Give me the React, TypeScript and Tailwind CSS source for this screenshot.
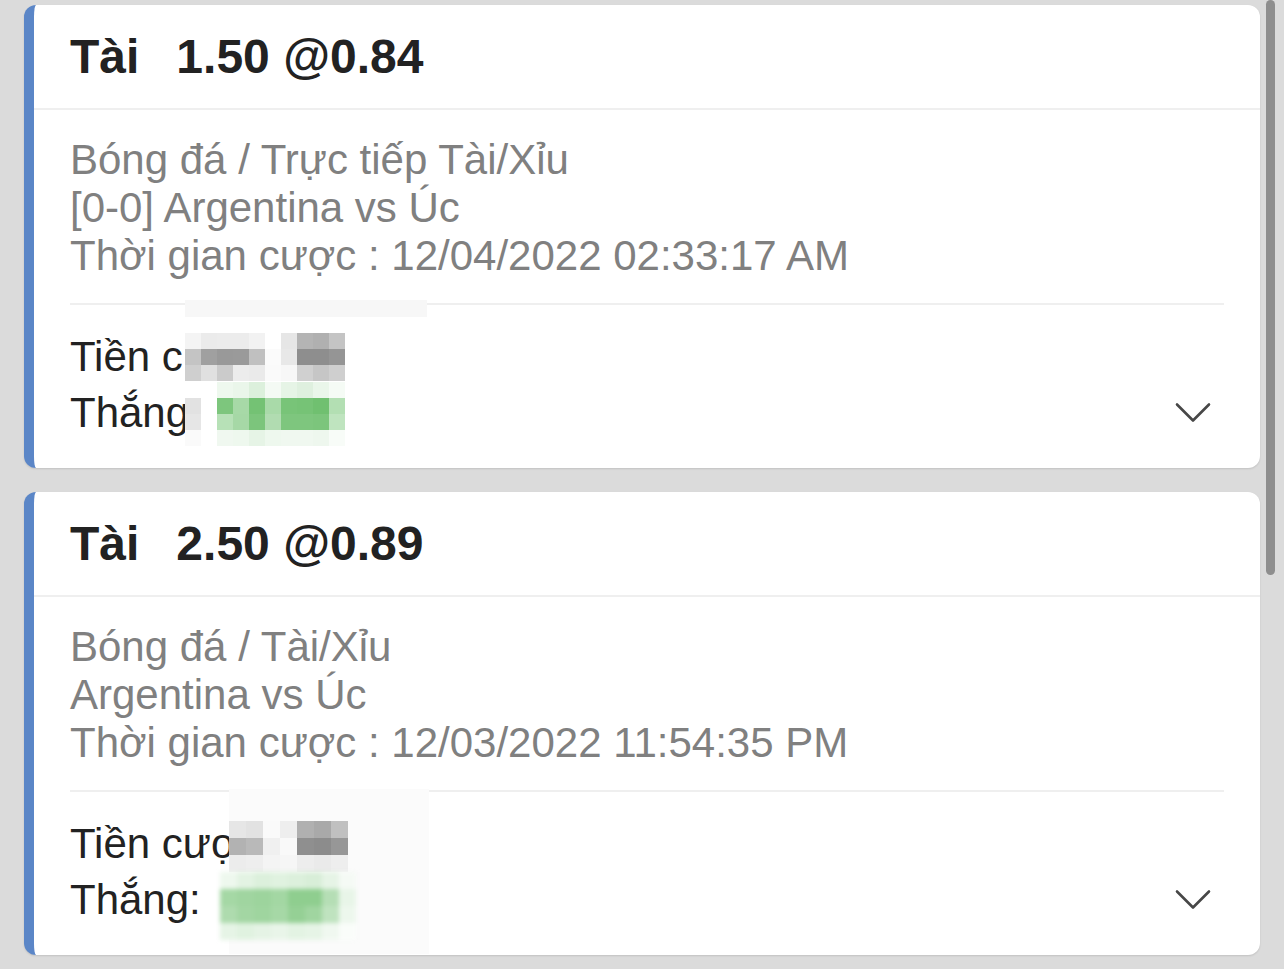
type Grid = {
  left: number;
  top: number;
  cw: number;
  ch: number;
  rows: string[][];
  soft?: boolean;
};

type Bet = {
  line: string;
  odds: string;
  info: string[];
  stake: string;
  win: string;
  veil: { left: number; top: number; w: number; h: number; color: string };
  grids: Grid[];
};

const bets: Bet[] = [
  {
    line: "1.50",
    odds: "@0.84",
    info: [
      "Bóng đá / Trực tiếp Tài/Xỉu",
      "[0-0] Argentina vs Úc",
      "Thời gian cược : 12/04/2022 02:33:17 AM",
    ],
    stake: "Tiền c",
    win: "Thắng",
    veil: { left: 151, top: 295, w: 242, h: 17, color: "#f7f7f7" },
    grids: [
      {
        left: 151,
        top: 328,
        cw: 16,
        ch: 16,
        rows: [
          ["#f4f4f4", "#ebebeb", "#ececec", "#ececec", "#f2f2f2", "#ffffff", "#e6e6e6", "#b4b4b4", "#b0b0b0", "#c4c4c4"],
          ["#c4c4c4", "#a0a0a0", "#999999", "#9a9a9a", "#c0c0c0", "#fbfbfb", "#e8e8e8", "#8e8e8e", "#8e8e8e", "#959595"],
          ["#cfcfcf", "#e0e0e0", "#cbcbcb", "#ececec", "#eaeaea", "#fafafa", "#f7f7f7", "#d0d0d0", "#c6c6c6", "#cfcfcf"],
        ],
      },
      {
        left: 151,
        top: 377,
        cw: 16,
        ch: 16,
        rows: [
          ["#ffffff", "#ffffff", "#eef8ee", "#eaf6ea", "#dcf0dc", "#f4faf4", "#e6f4e6", "#dff0df", "#eaf6ea", "#f5fbf5"],
          ["#e2e2e2", "#ffffff", "#7dc67d", "#a7d9a7", "#74c274", "#a9daa9", "#78c478", "#76c376", "#70c070", "#b3dfb3"],
          ["#e6e6e6", "#ffffff", "#b7e1b7", "#a6d8a6", "#7cc57c", "#b1dcb1", "#7ec67e", "#7ec67e", "#7cc57c", "#bfe4bf"],
          ["#fafafa", "#ffffff", "#f0f8f0", "#eef8ee", "#e6f4e6", "#eef8ee", "#f0f8f0", "#f0f8f0", "#eef7ee", "#f8fcf8"],
        ],
      },
    ],
  },
  {
    line: "2.50",
    odds: "@0.89",
    info: [
      "Bóng đá / Tài/Xỉu",
      "Argentina vs Úc",
      "Thời gian cược : 12/03/2022 11:54:35 PM",
    ],
    stake: "Tiền cược",
    win: "Thắng:",
    veil: { left: 195, top: 297, w: 200, h: 165, color: "#fbfbfb" },
    grids: [
      {
        left: 195,
        top: 329,
        cw: 17,
        ch: 17,
        rows: [
          ["#e6e6e6", "#e2e2e2", "#fafafa", "#eeeeee", "#b0b0b0", "#a9a9a9", "#c0c0c0"],
          ["#b2b2b2", "#b9b9b9", "#f0f0f0", "#f9f9f9", "#8f8f8f", "#8c8c8c", "#979797"],
          ["#ececec", "#eeeeee", "#f4f4f4", "#f6f6f6", "#ededed", "#eaeaea", "#eeeeee"],
        ],
      },
      {
        left: 186,
        top: 380,
        cw: 17,
        ch: 17,
        soft: true,
        rows: [
          ["#eef8ee", "#e3f3e3", "#dcf0dc", "#e0f2e0", "#dcf0dc", "#d8eed8", "#e6f4e6", "#f5faf5"],
          ["#a5d8a5", "#a0d5a0", "#9dd49d", "#a3d7a3", "#8fce8f", "#8fce8f", "#b5deb5", "#e8f5e8"],
          ["#aedbae", "#a3d6a3", "#9fd59f", "#a6d8a6", "#95d095", "#a0d5a0", "#bfe3bf", "#edf7ed"],
          ["#e6f4e6", "#e0f2e0", "#e5f3e5", "#e9f5e9", "#e3f3e3", "#e6f4e6", "#f0f8f0", "#fafdfa"],
        ],
      },
    ],
  },
];

const Pixels = ({ g }: { g: Grid }) => (
  <div
    className={"absolute flex flex-col " + (g.soft ? "blur-[2px]" : "")}
    style={{ left: g.left, top: g.top }}
  >
    {g.rows.map((row, i) => (
      <div key={i} className="flex">
        {row.map((c, j) => (
          <div key={j} style={{ width: g.cw, height: g.ch, backgroundColor: c }} />
        ))}
      </div>
    ))}
  </div>
);

const Chevron = () => (
  <svg width="36" height="22" viewBox="0 0 36 22" fill="none">
    <path d="M2 2.5 L18 18.5 L34 2.5" stroke="#474747" strokeWidth="2.6" strokeLinecap="round" strokeLinejoin="round" />
  </svg>
);

const BetCard = ({ bet }: { bet: Bet }) => {
  return (
    <div className="relative overflow-hidden rounded-xl border-l-[10px] border-[#5b86c7] bg-white shadow-[0_1px_2px_rgba(0,0,0,0.12)]">
      <div className="flex h-[105px] items-center border-b-2 border-[#efefef] pl-9 text-[48px] font-bold text-[#222]">
        <span>Tài</span>
        <span className="ml-[37px]">{bet.line} {bet.odds}</span>
      </div>
      <div className="px-9 pt-[26px]">
        <div className="text-[42px] leading-[48px] text-[#808080]">
          {bet.info.map((l) => (
            <div key={l}>{l}</div>
          ))}
        </div>
        <div className="mt-[23px] h-[2px] bg-[#efefef]" />
        <div className="flex items-end justify-between pb-[27px] pt-6 text-[42px] leading-[56px] text-[#222]">
          <div>
            <div>{bet.stake}</div>
            <div>{bet.win}</div>
          </div>
          <div className="mr-[13px] flex h-[56px] items-center">
            <Chevron />
          </div>
        </div>
      </div>
      <div
        className="absolute"
        style={{ left: bet.veil.left, top: bet.veil.top, width: bet.veil.w, height: bet.veil.h, backgroundColor: bet.veil.color }}
      />
      {bet.grids.map((g, i) => (
        <Pixels key={i} g={g} />
      ))}
    </div>
  );
};

export default function App() {
  return (
    <div className="relative h-[969px] overflow-hidden bg-[#dbdbdb] font-['Liberation_Sans',Arial,sans-serif]">
      <div className="flex flex-col gap-6 px-6 pt-[5px]">
        {bets.map((b) => (
          <BetCard key={b.line} bet={b} />
        ))}
      </div>
      <div className="absolute right-[9px] top-0 h-[575px] w-[9px] rounded-full bg-[#8e8e8e]" />
    </div>
  );
}
